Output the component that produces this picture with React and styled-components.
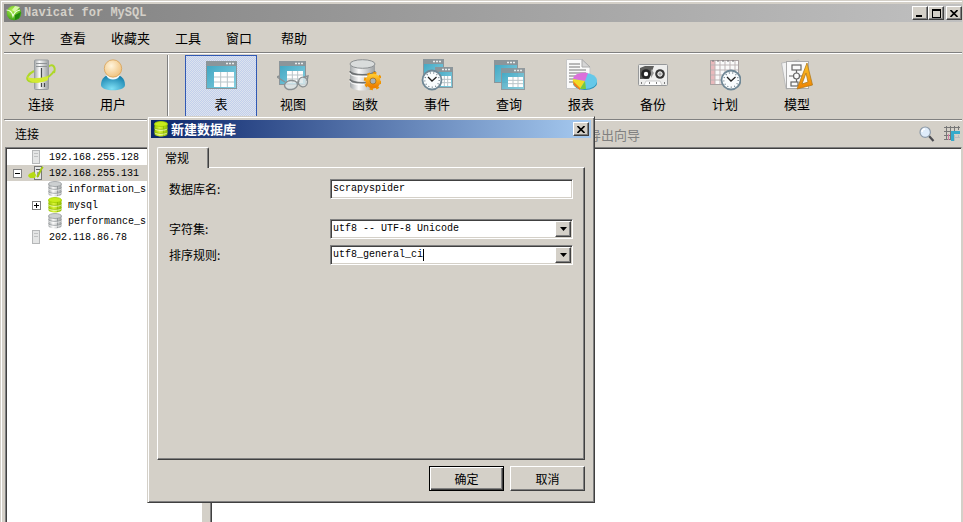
import React, { useState } from 'react'
import styled, { createGlobalStyle, css } from 'styled-components';

const GlobalStyle = createGlobalStyle`
  * {
    box-sizing: border-box;
  }
  body {
    margin: 0;
    overflow: hidden;
    background: #d4d0c8;
    color: #000;
    font-family: "Liberation Mono", "Noto Sans CJK SC", monospace;
    font-size: 12px;
  }
  button, input, select {
    margin: 0;
    padding: 0;
    border: none;
    border-radius: 0;
    color: inherit;
    font: inherit;
    background: none;
  }
  ul {
    margin: 0;
    padding: 0;
    list-style: none;
  }
`;

// shared gradients for all icons
const Defs = () => (
  <HiddenSvg aria-hidden='true'>
    <defs>
      <linearGradient id='teal' x1='0' y1='0' x2='1' y2='1'>
        <stop offset='0' stopColor='#3ba3c0' />
        <stop offset='1' stopColor='#86cfe0' />
      </linearGradient>
      <linearGradient id='steel' x1='0' y1='0' x2='1' y2='0'>
        <stop offset='0' stopColor='#a3a7a9' />
        <stop offset='0.35' stopColor='#fbfbfb' />
        <stop offset='1' stopColor='#9a9ea0' />
      </linearGradient>
      <linearGradient id='lime' x1='0' y1='0' x2='1' y2='0'>
        <stop offset='0' stopColor='#9dc800' />
        <stop offset='0.4' stopColor='#dcf53c' />
        <stop offset='1' stopColor='#8fbd00' />
      </linearGradient>
      <radialGradient id='skin' cx='0.4' cy='0.35' r='0.7'>
        <stop offset='0' stopColor='#fff4dc' />
        <stop offset='1' stopColor='#efc07a' />
      </radialGradient>
      <radialGradient id='shirt' cx='0.45' cy='0.9' r='0.8'>
        <stop offset='0' stopColor='#7fe0f5' />
        <stop offset='1' stopColor='#1580ad' />
      </radialGradient>
      <radialGradient id='leaf' cx='0.4' cy='0.3' r='0.8'>
        <stop offset='0' stopColor='#b4f04e' />
        <stop offset='1' stopColor='#2c9a0c' />
      </radialGradient>
      <linearGradient id='orange' x1='0' y1='0' x2='0' y2='1'>
        <stop offset='0' stopColor='#ffc62c' />
        <stop offset='1' stopColor='#ee8100' />
      </linearGradient>
    </defs>
  </HiddenSvg>
)

const LogoIcon = () => (
  <svg width='16' height='16' viewBox='0 0 16 16'>
    <circle cx='8' cy='8' r='7.3' fill='url(#leaf)' />
    <path d='M0.5 5 C4 5 6 7 7 11 C8 8 10 6 14 5' fill='none' stroke='#f1ffe0' strokeWidth='1.2' />
    <path d='M9 1 L14 2 L9 7 L6 5 Z' fill='#d9f9a8' />
    <path d='M9 10 L15 7 L13 13 L9 15 Z' fill='#23890c' />
  </svg>
)

const WindowShape = ({ x, y, w, h }) => (
  <g>
    <rect x={x + 0.5} y={y + 0.5} width={w - 1} height={h - 1} fill='url(#teal)' stroke='#8b959a' />
    <rect x={x} y={y} width={w} height='5' fill='#8b959a' />
    <path d={`M${x + w - 11} ${y + 2.5} h2 m1 0 h2 m1 0 h2`} stroke='#e9edee' strokeWidth='1.5' />
  </g>
)

const Cells = ({ x, y, w, h }) => (
  <g>
    <rect x={x} y={y} width={w} height={h} fill='#fff' />
    <path
      d={`M${x} ${y + h / 3} h${w} M${x} ${y + (h * 2) / 3} h${w} M${x + w / 3} ${y} v${h} M${x + (w * 2) / 3} ${y} v${h}`}
      stroke='#b9c5c9'
      strokeWidth='1'
    />
  </g>
)

const ClockShape = ({ cx, cy, r }) => (
  <g>
    <circle cx={cx} cy={cy} r={r - 1} fill='#f9fcfd' stroke='#6f8795' strokeWidth='1.8' />
    <circle cx={cx} cy={cy} r={r - 3.3} fill='none' stroke='#657581' strokeWidth='1.2' strokeDasharray='1 2.5' />
    <path d={`M${cx - 4} ${cy - 3} L${cx} ${cy + 1} L${cx + 4.5} ${cy - 3}`} fill='none' stroke='#222' strokeWidth='1.3' />
  </g>
)

const icons = {
  connect: (
    <>
      <path d='M29 14 C31 8 28 4 23 8' fill='none' stroke='#aed729' strokeWidth='2' />
      <rect x='9.5' y='1' width='14' height='29.5' rx='1' fill='url(#steel)' stroke='#999da0' />
      <path d='M11 4.5 h11 M11 7.5 h11' stroke='#8f9396' />
      <path d='M16.5 9 v12 M16.5 24 v4 M19.5 24 v4' stroke='#454a4d' strokeWidth='1.2' />
      <path d='M9 12 C3 15 0 20 4 22 C11 25 25 19 29 12' fill='none' stroke='#aed729' strokeWidth='2' />
      <path d='M2.5 17 C3 20 13 20 23 17 V21 C14 26 2 24 2.5 17 Z' fill='#d3ea33' />
    </>
  ),
  user: (
    <>
      <path d='M4 26 C4 19 9 15 16 15 C23 15 28 19 28 26 C28 33 4 33 4 26 Z' fill='url(#shirt)' />
      <path d='M9 16 C11 22 21 22 23 16' fill='#f3f9fb' />
      <circle cx='16' cy='9.5' r='8.7' fill='url(#skin)' stroke='#d59b4a' strokeWidth='0.7' />
    </>
  ),
  table: (
    <>
      <WindowShape x={1} y={2} w={31} h={28} />
      <Cells x={9} y={13} w={20} h={15} />
    </>
  ),
  view: (
    <>
      <WindowShape x={2} y={2} w={27} h={24} />
      <Cells x={10} y={12} w={16} h={12} />
      <g stroke='#8a9092' strokeWidth='1.4' fill='#dce6e9' fillOpacity='0.8'>
        <path d='M2 17 L0 18 L8 23' fill='none' />
        <ellipse cx='14' cy='26' rx='6.5' ry='4.5' transform='rotate(-8 14 26)' />
        <ellipse cx='26' cy='23' rx='4.5' ry='4.8' transform='rotate(15 26 23)' />
        <path d='M20 24 L22 22 M30 22 L31 17 L27 18' fill='none' />
      </g>
    </>
  ),
  func: (
    <>
      <path d='M1 5 V27 C1 33 26 33 26 27 V5 Z' fill='url(#steel)' />
      <path d='M1 12 C1 17 26 17 26 12 M1 20 C1 25 26 25 26 20' fill='none' stroke='#6d7173' strokeWidth='1.5' />
      <path d='M1 14 C1 19 26 19 26 14 M1 22 C1 27 26 27 26 22' fill='none' stroke='#fff' />
      <ellipse cx='13.5' cy='5' rx='12.5' ry='4.3' fill='#d9dcdc' stroke='#8b8f91' />
      <circle cx='24' cy='22' r='7.7' fill='none' stroke='#ed9300' strokeWidth='3' strokeDasharray='3 3.05' />
      <circle cx='24' cy='22' r='5.3' fill='none' stroke='url(#orange)' strokeWidth='4.5' />
      <circle cx='24' cy='22' r='3' fill='#a9b3b6' stroke='#a46404' strokeWidth='0.7' />
    </>
  ),
  event: (
    <>
      <WindowShape x={2} y={0} w={21} h={22} />
      <WindowShape x={14} y={8} w={18} h={21} />
      <Cells x={20} y={17} w={10} h={10} />
      <ClockShape cx={11} cy={21} r={10.5} />
    </>
  ),
  query: (
    <>
      <WindowShape x={1} y={1} w={24} h={23} />
      <g opacity='0.9'>
        <WindowShape x={8} y={9} w={24} h={22} />
      </g>
      <Cells x={15} y={18} w={15} h={10} />
    </>
  ),
  report: (
    <>
      <path d='M1.5 0.5 H17 L25 8 V29.5 H1.5 Z' fill='#fafafa' stroke='#c6c6c6' />
      <path d='M17 0.5 V8 H25 Z' fill='#d5d5d5' stroke='#aaa' />
      <path d='M4 5 h11 M4 8 h11 M4 11 h17 M4 14 h17 M4 17 h10 M4 20 h7 M4 23 h5' stroke='#777' strokeWidth='1' />
      <ellipse cx='20' cy='24' rx='12' ry='7' fill='#2d92b8' />
      <ellipse cx='20' cy='22' rx='12' ry='8' fill='#65c8e9' />
      <path d='M20 22 L8 20 C9 15 15 13 23 14 Z' fill='#dc70db' />
      <path d='M20 22 L8 20 C7 25 10 28 15 30 Z' fill='#f1db24' />
      <path d='M8 22 L15 29 V31 L9 26 Z' fill='#f07b22' />
      <path d='M20 22 L15 30 L21 30 Z' fill='#78c93c' />
    </>
  ),
  backup: (
    <>
      <rect x='1.5' y='5.5' width='29' height='21' rx='1' fill='#eeeeed' stroke='#96989a' />
      <path d='M3 9 L8 7 H17 L12 20 H3 Z' fill='#5d5d5b' />
      <circle cx='9' cy='15' r='4.8' fill='#242424' />
      <circle cx='9' cy='15' r='2.2' fill='#fff' />
      <path d='M14 10 L17 14 L14 19' fill='#9a9a9a' />
      <circle cx='23' cy='15' r='4.8' fill='#333' />
      <circle cx='23' cy='15' r='2.2' fill='#aaa' stroke='#fff' />
      <path d='M7 26 L9 22 H23 L25 26' fill='#fff' stroke='#ccc' />
      <path d='M4 24 h1 M12 24 h1 M19 24 h1 M27 24 h1' stroke='#555' strokeWidth='1.5' />
    </>
  ),
  schedule: (
    <>
      <rect x='1.5' y='1.5' width='28' height='24' fill='#fafafa' stroke='#a9a1a1' />
      <rect x='2' y='2' width='4' height='23' fill='#e9b9bc' />
      <path d='M2 6 h27 M2 11 h27 M2 16 h27 M2 21 h27 M6 2 v23 M11 2 v23 M16 2 v23 M21 2 v23 M26 2 v23' stroke='#bdb5b6' strokeWidth='1' />
      <path d='M4 1 v2 M9 1 v2 M14 1 v2 M19 1 v2 M24 1 v2' stroke='#777' />
      <ClockShape cx={22} cy={21} r={10.5} />
    </>
  ),
  model: (
    <>
      <path d='M0.5 4 L18 1 L22 27 L5 30 Z' fill='#f1f1f1' stroke='#bbb' />
      <rect x='5.5' y='2.5' width='22' height='27' fill='#fafafa' stroke='#aaa' />
      <g fill='none' stroke='#666' strokeWidth='1.2'>
        <rect x='11' y='6' width='9' height='5' />
        <path d='M15.5 11 v3 M8 17 h4 M19 17 h3' />
        <circle cx='15.5' cy='17' r='3' />
        <path d='M15.5 20 v3' />
        <rect x='10' y='23' width='7' height='4' />
      </g>
      <path d='M26 4 L31.5 26 L16 30 Z M25 14 L27 23 L21 25 Z' fill='url(#orange)' fillRule='evenodd' stroke='#b17a1b' strokeWidth='0.8' />
    </>
  ),
}

const DbIcon = ({ active }) => (
  <svg width='14' height='16' viewBox='0 0 14 16'>
    <path d='M0.5 3 V13 C0.5 16.3 13.5 16.3 13.5 13 V3 Z' fill={active ? 'url(#lime)' : 'url(#steel)'} />
    <ellipse cx='7' cy='3' rx='6.5' ry='2.5' fill={active ? '#c9ec1b' : '#cdd0d1'} stroke={active ? '#a3cf00' : '#999da0'} strokeWidth='0.8' />
    <path
      d='M0.5 6.5 C1 9 13 9 13.5 6.5 M0.5 10.5 C1 13 13 13 13.5 10.5 M9.5 5 V15'
      fill='none'
      stroke={active ? '#8fb900' : '#8b9093'}
      strokeWidth='0.8'
    />
    <path d='M0.8 7.8 C2 9.8 12 9.8 13.2 7.8 M0.8 11.8 C2 13.8 12 13.8 13.2 11.8' fill='none' stroke='#fff' strokeWidth='0.6' />
  </svg>
)

const ServerIcon = ({ active }) => (
  <svg width='16' height='16' viewBox='0 0 16 16'>
    <rect x={active ? 6.5 : 4.5} y='1.5' width='7' height='13' fill='#e4e5e5' stroke={active ? '#777' : '#b5b7b8'} />
    <path d={active ? 'M8 4.5 h4 M10 7 v5' : 'M6 4.5 h4 M6 7.5 h4'} stroke={active ? '#555' : '#c0c2c3'} />
    {active && (
      <>
        <path d='M1 9 L6 6.5 L8 10 L7 13 L2 13 L0 11 Z' fill='#b6da15' />
        <path d='M9 12 C12 9 12 4 15 2' fill='none' stroke='#a3c80f' strokeWidth='2' />
      </>
    )}
  </svg>
)

const SearchIcon = () => (
  <svg width='16' height='16' viewBox='0 0 16 16'>
    <path d='M10 10 L14.5 15' stroke='#4b4b50' strokeWidth='2.2' />
    <circle cx='6.2' cy='6.2' r='5.2' fill='#dfecfa' stroke='#8d9aa8' strokeWidth='1.2' />
    <path d='M3 6 C3 4 4 3 6 3' fill='none' stroke='#fff' strokeWidth='1.5' />
  </svg>
)

const GridIcon = () => (
  <svg width='16' height='16' viewBox='0 0 16 16'>
    <path d='M0 1.5 h16 M0 5.5 h8 M0 9.5 h8 M2.5 0 v14 M6.5 0 v14 M10.5 0 v5 M14.5 0 v4 M0 13.5 h7' stroke='#777' strokeWidth='1' />
    <path d='M7 5 H16 V8 H10 V15 H7 Z' fill='#36aacb' />
    <path d='M10.5 9 v6 M14.5 9 v3 M10 11.5 h6' stroke='#bbb' />
    <path d='M4.5 8 v6' stroke='#d77fa5' />
  </svg>
)

const CloseGlyph = () => (
  <svg width='8' height='7' viewBox='0 0 8 7'>
    <path d='M0.5 0 L7.5 7 M7.5 0 L0.5 7' stroke='#000' strokeWidth='1.6' />
  </svg>
)

const menus = ['文件', '查看', '收藏夹', '工具', '窗口', '帮助']

const tools = [
  { icon: 'table', label: '表' },
  { icon: 'view', label: '视图' },
  { icon: 'func', label: '函数' },
  { icon: 'event', label: '事件' },
  { icon: 'query', label: '查询' },
  { icon: 'report', label: '报表' },
  { icon: 'backup', label: '备份' },
  { icon: 'schedule', label: '计划' },
  { icon: 'model', label: '模型' },
]

const nodes = [
  { name: '192.168.255.128', type: 'server', level: 0 },
  { name: '192.168.255.131', type: 'server', level: 0, active: true, sign: 'minus' },
  { name: 'information_s', type: 'db', level: 1 },
  { name: 'mysql', type: 'db', level: 1, active: true, sign: 'plus' },
  { name: 'performance_s', type: 'db', level: 1 },
  { name: '202.118.86.78', type: 'server', level: 0 },
]

const ToolItem = ({ icon, label, active, onClick }) => (
  <ToolButton type='button' $active={active} onClick={onClick}>
    <svg width='32' height='32' viewBox='0 0 32 32'>{icons[icon]}</svg>
    {label}
  </ToolButton>
)

const TreeNode = ({ name, type, level, active, sign }) => (
  <TreeRow $level={level} $selected={type === 'server' && active}>
    {sign ? (
      <Expander type='button' aria-label={name}>
        <svg width='9' height='9' viewBox='0 0 9 9'>
          <path d={sign === 'plus' ? 'M2 4.5 h5 M4.5 2 v5' : 'M2 4.5 h5'} stroke='#000' />
        </svg>
      </Expander>
    ) : (
      <ExpanderGap />
    )}
    <NodeIcon>{type === 'db' ? <DbIcon active={active} /> : <ServerIcon active={active} />}</NodeIcon>
    {name}
  </TreeRow>
)

const ArrowGlyph = () => (
  <svg width='7' height='4' viewBox='0 0 7 4'>
    <path d='M0 0 H7 L3.5 4 Z' fill='#000' />
  </svg>
)

const NewDatabase = () => {
  const [dbName, setDbName] = useState('scrapyspider')
  const [collation, setCollation] = useState('utf8_general_ci')

  return (
    <Dialog role='dialog' aria-labelledby='dialog-title'>
      <DialogTitle>
        <DbIcon active />
        <h2 id='dialog-title'>新建数据库</h2>
        <CaptionButton type='button' aria-label='关闭'><CloseGlyph /></CaptionButton>
      </DialogTitle>
      <DialogBody onSubmit={(e) => e.preventDefault()}>
        <Tab type='button'>常规</Tab>
        <Panel>
          <Field $space>
            <label htmlFor='db-name'>数据库名:</label>
            <Sunken>
              <TextInput id='db-name' type='text' value={dbName} onChange={(e) => setDbName(e.target.value)} />
            </Sunken>
          </Field>
          <Field>
            <label htmlFor='charset'>字符集:</label>
            <Sunken>
              <Select id='charset' defaultValue='utf8'>
                <option value='utf8'>utf8 -- UTF-8 Unicode</option>
              </Select>
              <Arrow as='span'><ArrowGlyph /></Arrow>
            </Sunken>
          </Field>
          <Field>
            <label htmlFor='collation'>排序规则:</label>
            <Sunken>
              <ComboInput id='collation' type='text' value={collation} onChange={(e) => setCollation(e.target.value)} />
              <Caret />
              <Arrow type='button' aria-label='排序规则'><ArrowGlyph /></Arrow>
            </Sunken>
          </Field>
        </Panel>
        <Actions>
          <PushButton type='submit' $primary>确定</PushButton>
          <PushButton type='button'>取消</PushButton>
        </Actions>
      </DialogBody>
    </Dialog>
  )
}

const App = () => {
  const [current, setCurrent] = useState('table')

  return (
    <Window>
      <GlobalStyle />
      <Defs />
      <TitleBar>
        <LogoIcon />
        <h1>Navicat for MySQL</h1>
        <CaptionButton type='button' aria-label='最小化'>
          <svg width='8' height='7' viewBox='0 0 8 7'><rect x='0' y='5' width='6' height='2' /></svg>
        </CaptionButton>
        <CaptionButton type='button' aria-label='最大化'>
          <svg width='9' height='9' viewBox='0 0 9 9'><path d='M0 0 H9 V9 H0 Z M1 2 V8 H8 V2 Z' fillRule='evenodd' /></svg>
        </CaptionButton>
        <CaptionButton type='button' aria-label='关闭' $apart><CloseGlyph /></CaptionButton>
      </TitleBar>
      <MenuBar>
        {menus.map((menu) => <button key={menu} type='button'>{menu}</button>)}
      </MenuBar>
      <Toolbar>
        <ToolItem icon='connect' label='连接' />
        <ToolItem icon='user' label='用户' />
        <Divider />
        {tools.map((tool) => (
          <ToolItem key={tool.icon} {...tool} active={current === tool.icon} onClick={() => setCurrent(tool.icon)} />
        ))}
      </Toolbar>
      <Main>
        <Side>
          <PaneHead>连接</PaneHead>
          <Tree>
            {nodes.map((node) => <TreeNode key={node.name} {...node} />)}
          </Tree>
        </Side>
        <Content>
          <PaneHead $end>
            <WizardButton type='button' disabled>导出向导</WizardButton>
            <IconButton type='button' aria-label='搜索'><SearchIcon /></IconButton>
            <IconButton type='button' aria-label='网格'><GridIcon /></IconButton>
          </PaneHead>
          <List />
        </Content>
      </Main>
      {/* dialog stays above the main window */}
      <NewDatabase />
    </Window>
  )
}

const raised = css`
  border: 1px solid;
  border-color: #fff #404040 #404040 #fff;
  box-shadow: inset -1px -1px 0 #808080;
  background: #d4d0c8;
`;

const sunken = css`
  border: 1px solid;
  border-color: #808080 #fff #fff #808080;
  box-shadow: inset 1px 1px 0 #404040, inset -1px -1px 0 #d4d0c8;
  background: #fff;
`;

// panes that run down to the bottom edge of the window
const pane = css`
  flex: 1;
  border: 1px solid;
  border-color: #808080 #d4d0c8 #fff #808080;
  border-bottom: none;
  box-shadow: inset 1px 1px 0 #404040;
  background: #fff;
`;

const HiddenSvg = styled.svg`
  position: absolute;
  width: 0;
  height: 0;
`;

const Window = styled.div`
  position: relative;
  display: flex;
  flex-direction: column;
  min-height: 100vh;
  padding: 2px 0 0 2px;
  border: 1px solid #d4d0c8;
  border-width: 1px 1px 0 1px;
  box-shadow: inset 1px 1px 0 #fff;
`;

const TitleBar = styled.header`
  display: flex;
  align-items: center;
  margin: 1px 0 0 1px;
  height: 18px;
  padding-left: 2px;
  background: linear-gradient(to right, #808080, #c0c0c0);
  h1 {
    flex: 1;
    margin: 0 0 0 2px;
    color: #d4d0c8;
    font-family: "Liberation Mono", monospace;
    font-size: 12px;
    line-height: 18px;
  }
`;

const CaptionButton = styled.button`
  ${raised}
  display: flex;
  align-items: center;
  justify-content: center;
  width: 16px;
  height: 14px;
  margin-left: ${({ $apart }) => ($apart ? '2px' : '0')};
`;

const MenuBar = styled.nav`
  display: flex;
  gap: 25px;
  height: 31px;
  padding: 0 5px;
  margin-left: 1px;
  border-bottom: 1px solid #808080;
  font-size: 13px;
  button:last-child {
    margin-left: 4px;
  }
`;

const Toolbar = styled.div`
  display: flex;
  height: 67px;
  margin-left: 1px;
  padding: 1px 0 2px 1px;
  border-top: 1px solid #fff;
  border-bottom: 1px solid #808080;
`;

const ToolButton = styled.button`
  display: flex;
  flex-direction: column;
  align-items: center;
  width: 72px;
  padding-top: 3px;
  border: 1px solid transparent;
  font-size: 13px;
  line-height: 16px;
  gap: 7px;
  ${({ $active }) => $active && css`
    border-color: #3159b5;
    background: repeating-conic-gradient(#c2cfec 0% 25%, #dde3ee 0% 50%) 0 0 / 2px 2px;
  `}
`;

const Divider = styled.span`
  width: 2px;
  margin: 0 16px 0 18px;
  border-left: 1px solid #808080;
  border-right: 1px solid #fff;
`;

const Main = styled.main`
  display: flex;
  flex: 1;
  margin-left: 2px;
  border-top: 1px solid #fff;
`;

const Side = styled.section`
  display: flex;
  flex-direction: column;
  width: 198px;
  margin-right: 7px;
`;

const Content = styled.section`
  display: flex;
  flex: 1;
  flex-direction: column;
`;

const PaneHead = styled.div`
  display: flex;
  align-items: center;
  justify-content: ${({ $end }) => ($end ? 'flex-end' : 'flex-start')};
  height: 26px;
  padding: 0 2px 0 10px;
  gap: 9px;
  font-size: 12px;
`;

const WizardButton = styled.button`
  margin-left: 368px;
  margin-right: auto;
  color: #808080;
  font-size: 13px;
`;

const IconButton = styled.button`
  display: flex;
`;

const Tree = styled.ul`
  ${pane}
  padding: 1px 1px 0;
  overflow: hidden;
  font-size: 10px;
`;

const List = styled.div`
  ${pane}
`;

const TreeRow = styled.li`
  display: flex;
  align-items: center;
  height: 16px;
  padding-left: ${({ $level }) => ($level ? '25px' : '6px')};
  background: ${({ $selected }) => ($selected ? '#d4d0c8' : 'transparent')};
  white-space: nowrap;
`;

const Expander = styled.button`
  display: flex;
  width: 9px;
  height: 9px;
  outline: 1px solid #808080;
  outline-offset: -1px;
  background: #fff;
`;

const ExpanderGap = styled.span`
  width: 9px;
`;

const NodeIcon = styled.span`
  display: flex;
  justify-content: center;
  width: 16px;
  margin: 0 5px 0 6px;
`;

const Dialog = styled.section`
  position: absolute;
  left: 146px;
  top: 115px;
  width: 448px;
  padding: 3px;
  border: 1px solid;
  border-color: #d4d0c8 #404040 #404040 #d4d0c8;
  box-shadow: inset 1px 1px 0 #fff, inset -1px -1px 0 #808080;
  background: #d4d0c8;
`;

const DialogTitle = styled.header`
  display: flex;
  align-items: center;
  height: 18px;
  padding: 0 2px 0 3px;
  background: linear-gradient(to right, #0a246a, #a6caf0);
  h2 {
    flex: 1;
    margin: 0 0 0 3px;
    color: #fff;
    font-family: "Noto Sans CJK SC", sans-serif;
    font-size: 13px;
    line-height: 18px;
  }
`;

const DialogBody = styled.form`
  display: flex;
  flex-direction: column;
  padding: 9px 6px 8px;
`;

const Tab = styled.button`
  position: relative;
  z-index: 1;
  align-self: flex-start;
  width: 52px;
  height: 21px;
  margin-bottom: -1px;
  padding-right: 12px;
  border: 1px solid;
  border-color: #fff #404040 transparent #fff;
  border-bottom: none;
  border-radius: 2px 2px 0 0;
  box-shadow: inset -1px 0 0 #808080;
  background: #d4d0c8;
`;

const Panel = styled.div`
  display: flex;
  flex-direction: column;
  gap: 6px;
  min-height: 293px;
  padding: 11px;
  border: 1px solid;
  border-color: #fff #404040 #404040 #fff;
  box-shadow: inset -1px -1px 0 #808080;
`;

const Field = styled.div`
  display: grid;
  grid-template-columns: 161px 1fr;
  align-items: center;
  margin-bottom: ${({ $space }) => ($space ? '14px' : '0')};
  line-height: 20px;
  label {
    font-family: "Noto Sans CJK SC", sans-serif;
  }
`;

const Sunken = styled.div`
  ${sunken}
  position: relative;
  display: flex;
  align-items: center;
  height: 20px;
  padding: 1px;
  font-size: 10px;
`;

const TextInput = styled.input`
  flex: 1;
  min-width: 0;
  height: 16px;
  padding: 0 1px;
  outline: none;
`;

const Select = styled.select`
  flex: 1;
  height: 16px;
  padding: 0 1px;
  appearance: none;
  outline: none;
  line-height: 14px;
`;

const ComboInput = styled.input`
  field-sizing: content;
  height: 16px;
  padding-left: 1px;
  outline: none;
`;

const Caret = styled.span`
  width: 1px;
  height: 12px;
  background: #000;
`;

const Arrow = styled.button`
  ${raised}
  display: flex;
  align-items: center;
  justify-content: center;
  width: 16px;
  height: 16px;
  margin-left: auto;
`;

const Actions = styled.div`
  display: flex;
  justify-content: flex-end;
  gap: 6px;
  margin-top: 6px;
`;

const PushButton = styled.button`
  ${raised}
  width: 75px;
  height: 25px;
  ${({ $primary }) => $primary && css`
    border-color: #000;
    box-shadow: inset 1px 1px 0 #fff, inset -1px -1px 0 #404040, inset -2px -2px 0 #808080;
  `}
`;

export default App
